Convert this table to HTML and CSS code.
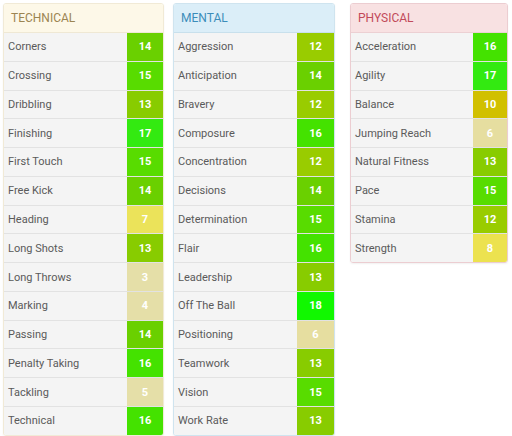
FILE: index.html
```html
<!DOCTYPE html>
<html>
<head>
<meta charset="utf-8">
<link rel="stylesheet" href="styles.css">
</head>
<body>
<div class="board">
  <section class="panel technical">
    <h2 class="head">TECHNICAL</h2>
    <ul class="rows">
      <li class="row"><span class="label">Corners</span><span class="val v14">14</span></li>
      <li class="row"><span class="label">Crossing</span><span class="val v15">15</span></li>
      <li class="row"><span class="label">Dribbling</span><span class="val v13">13</span></li>
      <li class="row"><span class="label">Finishing</span><span class="val v17">17</span></li>
      <li class="row"><span class="label">First Touch</span><span class="val v15">15</span></li>
      <li class="row"><span class="label">Free Kick</span><span class="val v14">14</span></li>
      <li class="row"><span class="label">Heading</span><span class="val v7">7</span></li>
      <li class="row"><span class="label">Long Shots</span><span class="val v13">13</span></li>
      <li class="row"><span class="label">Long Throws</span><span class="val v3">3</span></li>
      <li class="row"><span class="label">Marking</span><span class="val v4">4</span></li>
      <li class="row"><span class="label">Passing</span><span class="val v14">14</span></li>
      <li class="row"><span class="label">Penalty Taking</span><span class="val v16">16</span></li>
      <li class="row"><span class="label">Tackling</span><span class="val v5">5</span></li>
      <li class="row"><span class="label">Technical</span><span class="val v16">16</span></li>
    </ul>
  </section>
  <section class="panel mental">
    <h2 class="head">MENTAL</h2>
    <ul class="rows">
      <li class="row"><span class="label">Aggression</span><span class="val v12">12</span></li>
      <li class="row"><span class="label">Anticipation</span><span class="val v14">14</span></li>
      <li class="row"><span class="label">Bravery</span><span class="val v12">12</span></li>
      <li class="row"><span class="label">Composure</span><span class="val v16">16</span></li>
      <li class="row"><span class="label">Concentration</span><span class="val v12">12</span></li>
      <li class="row"><span class="label">Decisions</span><span class="val v14">14</span></li>
      <li class="row"><span class="label">Determination</span><span class="val v15">15</span></li>
      <li class="row"><span class="label">Flair</span><span class="val v16">16</span></li>
      <li class="row"><span class="label">Leadership</span><span class="val v13">13</span></li>
      <li class="row"><span class="label">Off The Ball</span><span class="val v18">18</span></li>
      <li class="row"><span class="label">Positioning</span><span class="val v6">6</span></li>
      <li class="row"><span class="label">Teamwork</span><span class="val v13">13</span></li>
      <li class="row"><span class="label">Vision</span><span class="val v15">15</span></li>
      <li class="row"><span class="label">Work Rate</span><span class="val v13">13</span></li>
    </ul>
  </section>
  <section class="panel physical">
    <h2 class="head">PHYSICAL</h2>
    <ul class="rows">
      <li class="row"><span class="label">Acceleration</span><span class="val v16">16</span></li>
      <li class="row"><span class="label">Agility</span><span class="val v17">17</span></li>
      <li class="row"><span class="label">Balance</span><span class="val v10">10</span></li>
      <li class="row"><span class="label">Jumping Reach</span><span class="val v6">6</span></li>
      <li class="row"><span class="label">Natural Fitness</span><span class="val v13">13</span></li>
      <li class="row"><span class="label">Pace</span><span class="val v15">15</span></li>
      <li class="row"><span class="label">Stamina</span><span class="val v12">12</span></li>
      <li class="row"><span class="label">Strength</span><span class="val v8">8</span></li>
    </ul>
  </section>
</div>
</body>
</html>
```

FILE: styles.css
```css
* { box-sizing: border-box; }
html, body { margin: 0; background: #ffffff; }
body {
  padding: 3px 0 0 3px;
  font-family: Roboto, "Liberation Sans", Arial, sans-serif;
}
.board {
  display: flex;
  align-items: flex-start;
  gap: 9px;
}
.panel {
  border: 1px solid #e6e6e6;
  border-radius: 3px;
  overflow: hidden;
  box-shadow: 0 1px 2px rgba(0,0,0,0.06);
}
.technical { width: 161px; border-color: #f1ead6; }
.mental { width: 162px; border-color: #cfe4ef; }
.physical { width: 158px; margin-left: 6px; border-color: #eccdd1; }
.head {
  margin: 0;
  height: 29px;
  padding: 0 0 1px 7px;
  display: flex;
  align-items: center;
  font-size: 12px;
  font-weight: 400;
  letter-spacing: 0;
  border-bottom: 1px solid #e2e2e2;
}
.technical .head { background: #fdf8e8; color: #9c8552; border-bottom-color: #efe8d4; }
.mental .head { background: #dbeef8; color: #3b8dba; border-bottom-color: #c8e0ec; }
.physical .head { background: #f8e1e2; color: #c24a5a; border-bottom-color: #ecd0d3; }
.rows { list-style: none; margin: 0; padding: 0; }
.row {
  display: flex;
  height: 28.77px;
  border-bottom: 1px solid #e2e2e2;
  background: #f4f4f4;
}
.row:last-child { border-bottom: 0; height: 27.77px; }
.label {
  flex: 1;
  display: flex;
  align-items: center;
  padding: 0 0 0 4px;
  font-size: 11px;
  color: #5a5a5a;
}
.val {
  width: 36px;
  display: flex;
  align-items: center;
  justify-content: center;
  font-size: 11px;
  font-weight: 700;
  color: #ffffff;
}
.mental .val { width: 37px; }
.physical .val { width: 34px; }
.v3, .v4, .v5 { background: #e5dfa8; }
.v6 { background: #e6dea0; }
.v7 { background: #ebe35a; }
.v8 { background: #ece24f; }
.v10 { background: #d1c000; }
.v12 { background: #99cc00; }
.v13 { background: #88cc00; }
.v14 { background: #6ad000; }
.v15 { background: #58dc00; }
.v16 { background: #44e200; }
.v17 { background: #33ea11; }
.v18 { background: #11f800; }
```
